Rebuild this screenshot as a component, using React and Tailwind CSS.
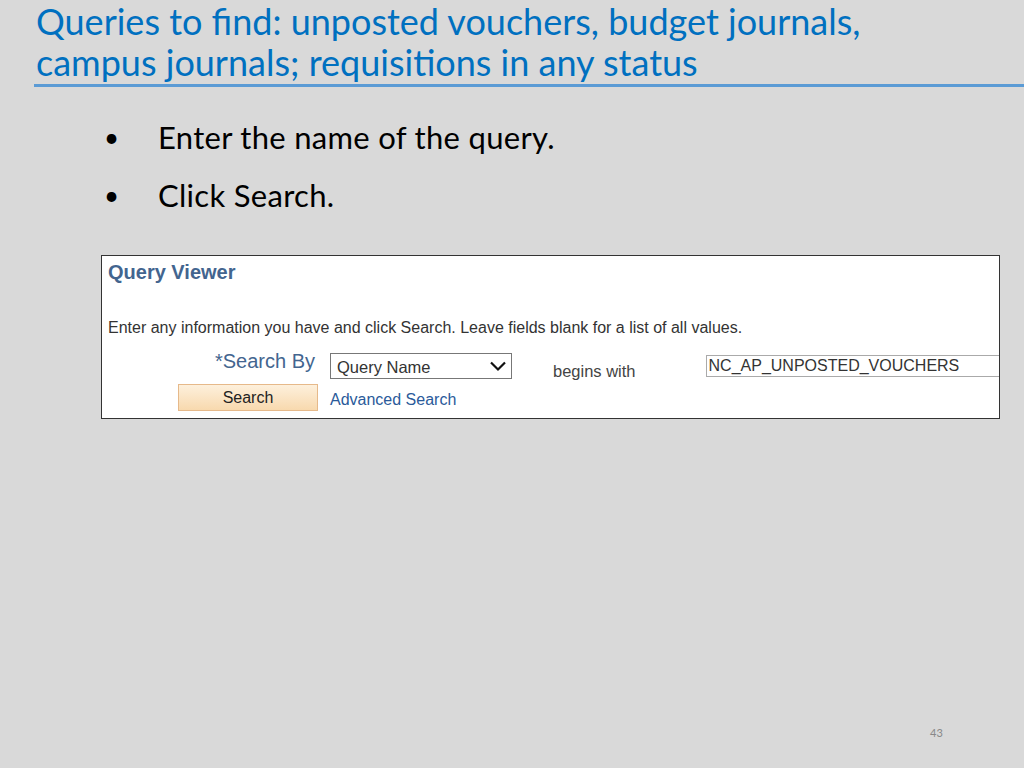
export default function App() {
  return (
    <div className="w-[1024px] h-[768px] bg-[#d9d9d9] relative overflow-hidden">
      <div className="pl-[36px] pt-[1px]">
        <h1 className="text-[#0070c0] text-[36px] leading-[41px] tracking-[0px]" style={{ fontFamily: 'Lato, "Open Sans", sans-serif' }}>
          Queries to find: unposted vouchers, budget journals,<br />campus journals; requisitions in any status
        </h1>
      </div>
      <div className="ml-[34px] mt-[1px] h-[3px] bg-[#5b9bd5]" />
      <ul className="mt-[32px] ml-[104px] flex flex-col gap-[22px] text-[31px] leading-[36px] text-black tracking-[0.3px]" style={{ fontFamily: 'Lato, "Open Sans", sans-serif' }}>
        <li className="flex"><span className="w-[54px] text-[26px]">•</span><span>Enter the name of the query.</span></li>
        <li className="flex"><span className="w-[54px] text-[26px]">•</span><span>Click Search.</span></li>
      </ul>
      <div className="absolute left-[101px] top-[255px] w-[899px] h-[164px] bg-white border border-[#333]" style={{ fontFamily: '"Liberation Sans", Arial, sans-serif' }}>
        <div className="pl-[6px] pt-[5px] text-[20px] font-bold text-[#43658f] leading-[22px]">Query Viewer</div>
        <div className="pl-[6px] mt-[35px] text-[16px] text-[#333] leading-[20px]">Enter any information you have and click Search. Leave fields blank for a list of all values.</div>
        <div className="flex items-start mt-[15px]">
          <div className="w-[228px] text-right pr-[15px] text-[20px] text-[#43658f] leading-[16px]">*Search By</div>
          <div className="w-[182px] h-[26px] border border-[#777] flex items-center justify-between pl-[6px] pr-[4px] text-[16.5px] text-[#333]">
            <span className="pt-[2px]">Query Name</span>
            <svg width="18" height="12" viewBox="0 0 18 12"><path d="M2 2.5 L9 9.5 L16 2.5" stroke="#111" strokeWidth="2.2" fill="none" /></svg>
          </div>
          <div className="ml-[41px] pt-[10px] text-[16.5px] text-[#444] leading-[16px]">begins with</div>
          <div className="ml-[70px] mt-[2px] flex-1 h-[22px] border border-[#aaa] border-r-0 pl-[2px] text-[16px] text-[#333] leading-[20px]">NC_AP_UNPOSTED_VOUCHERS</div>
        </div>
        <div className="flex items-center mt-[4px]">
          <div className="ml-[76px] w-[140px] h-[27px] border border-[#e6b98a] bg-gradient-to-b from-[#fdf0dc] to-[#f8d9ae] flex items-center justify-center text-[16px] text-[#222]">Search</div>
          <div className="ml-[12px] pt-[5px] text-[16px] text-[#2a5a9a]">Advanced Search</div>
        </div>
      </div>
      <div className="absolute left-[930px] top-[725px] text-[11px] text-[#888]" style={{ fontFamily: 'Lato, sans-serif' }}>43</div>
    </div>
  );
}
